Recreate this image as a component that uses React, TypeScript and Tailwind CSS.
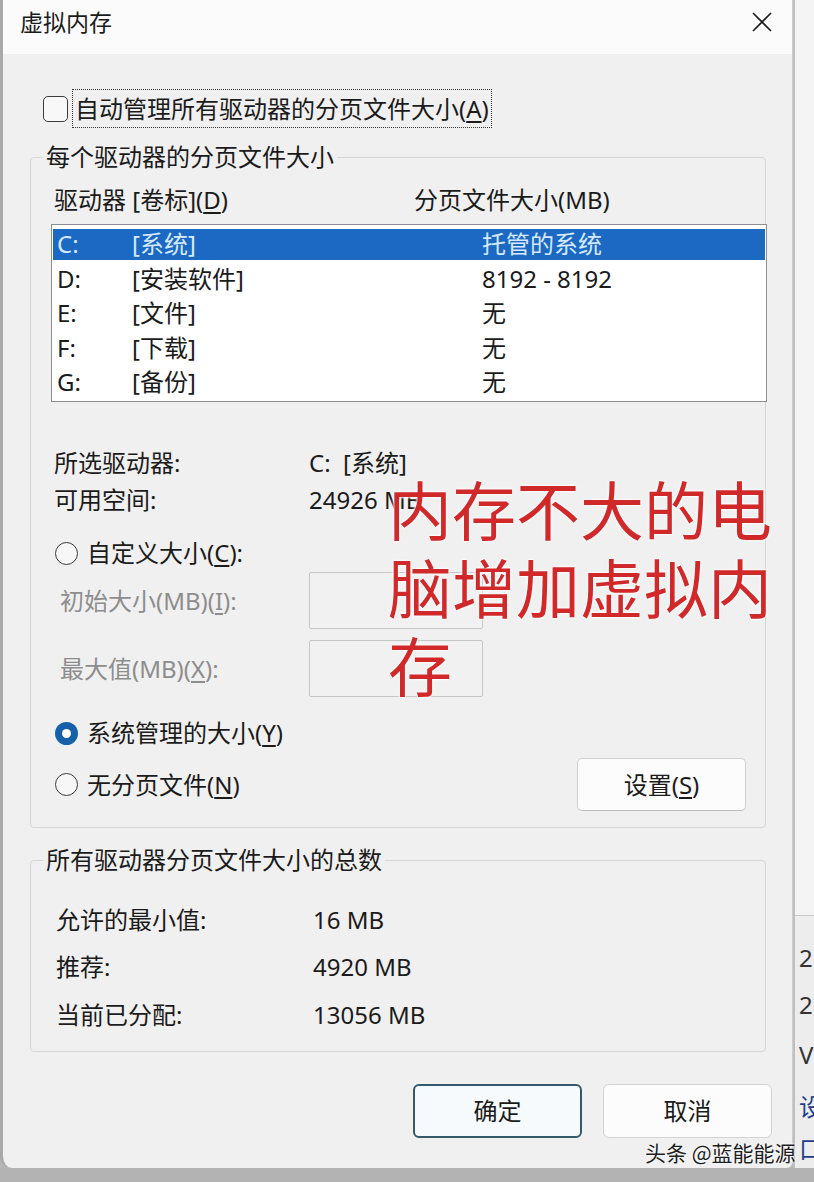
import React from "react";

const Radio = ({ checked }: { checked?: boolean }) =>
  checked ? (
    <span className="w-[23px] h-[23px] rounded-full bg-[#1560a8] flex items-center justify-center shrink-0">
      <span className="w-[9px] h-[9px] rounded-full bg-white" />
    </span>
  ) : (
    <span className="w-[23px] h-[23px] rounded-full border-[1.5px] border-[#3a3a3a] bg-[#f7f7f7] shrink-0" />
  );

const rows = [
  { d: "C:", l: "[系统]", s: "托管的系统", sel: true },
  { d: "D:", l: "[安装软件]", s: "8192 - 8192" },
  { d: "E:", l: "[文件]", s: "无" },
  { d: "F:", l: "[下载]", s: "无" },
  { d: "G:", l: "[备份]", s: "无" },
];

export default function App() {
  return (
    <div className="w-[814px] h-[1182px] bg-[#b6b6b6] flex flex-col overflow-hidden relative font-['Noto_Sans','Noto_Sans_CJK_SC',sans-serif] text-[#1b1b1b]">
      <div className="flex h-[1168px] shrink-0">
        {/* dialog window */}
        <div className="w-[793px] h-full flex flex-col border-l-[3px] border-r border-l-[#a9a9a9] border-r-[#cdcdcd] rounded-bl-[12px] rounded-br-[6px] overflow-hidden bg-[#f0f0f0]">
          {/* title bar */}
          <div className="h-[54px] shrink-0 bg-[#fbfbfb] flex justify-between items-start pl-[17px] pr-[20px] pt-[7px]">
            <span className="text-[23px] leading-[30px]">虚拟内存</span>
            <svg width="20" height="20" viewBox="0 0 20 20" className="mt-[5px]">
              <path d="M1 1 L19 19 M19 1 L1 19" stroke="#1a1a1a" strokeWidth="1.6" fill="none" />
            </svg>
          </div>
          {/* body */}
          <div className="flex-1 flex flex-col">
            {/* auto manage checkbox */}
            <div className="mt-[35px] ml-[40px] h-[39px] flex items-center">
              <span className="w-[25px] h-[26px] rounded-[5px] border-[1.5px] border-[#3c3c3c] bg-[#f8f8f8] shrink-0" />
              <span className="ml-[4px] h-[39px] border-[1.5px] border-dotted border-[#333] px-[2px] flex items-center text-[24px] leading-[30px]">
                自动管理所有驱动器的分页文件大小(<u className="underline-offset-[3px]">A</u>)
              </span>
            </div>

            {/* group 1 */}
            <div className="mt-[29px] ml-[27px] w-[736px] h-[671px] shrink-0 border border-[#d6d6d6] rounded-[4px] relative flex flex-col">
              <span className="absolute top-[-17px] left-[12px] px-[3px] bg-[#f0f0f0] text-[24px] leading-[32px]">
                每个驱动器的分页文件大小
              </span>
              <div className="mt-[27px] h-[30px] pl-[23px] flex text-[24px] leading-[30px]">
                <span className="w-[360px]">
                  驱动器 [卷标](<u className="underline-offset-[3px]">D</u>)
                </span>
                <span>分页文件大小(MB)</span>
              </div>
              {/* list box */}
              <div className="mt-[9px] ml-[20px] mr-[-2px] h-[178px] border border-[#8e8e8e] bg-white pt-[2px] px-[1px] flex flex-col">
                {rows.map((r) => (
                  <div key={r.d} className="h-[34.5px] py-[2px] shrink-0">
                    <div
                      className={
                        r.sel
                          ? "h-full flex items-center pl-[4px] bg-[#1b69c2] text-[#d6e9ff] text-[24px] leading-[30px]"
                          : "h-full flex items-center pl-[4px] text-[24px] leading-[30px]"
                      }
                    >
                      <span className="w-[75px]">{r.d}</span>
                      <span className="w-[350px]">{r.l}</span>
                      <span>{r.s}</span>
                    </div>
                  </div>
                ))}
              </div>

              {/* selected drive info */}
              <div className="mt-[42px] pl-[23px] flex flex-col text-[24px] leading-[30px]">
                <div className="h-[37px] flex items-center">
                  <span className="w-[255px]">所选驱动器:</span>
                  <span>C:&nbsp;&nbsp;[系统]</span>
                </div>
                <div className="h-[37px] flex items-center">
                  <span className="w-[255px]">可用空间:</span>
                  <span>24926 MB</span>
                </div>
              </div>

              {/* custom size */}
              <div className="mt-[17px] pl-[24px] h-[36px] flex items-center gap-[9px] text-[24px] leading-[30px]">
                <Radio />
                <span>
                  自定义大小(<u className="underline-offset-[3px]">C</u>):
                </span>
              </div>
              <div className="mt-[1px] pl-[29px] h-[57px] flex items-center text-[24px] leading-[30px] text-[#8d8d8d]">
                <span className="w-[249px]">
                  初始大小(MB)(<u className="underline-offset-[3px]">I</u>):
                </span>
                <span className="w-[174px] h-[57px] border border-[#c6c6c6] rounded-[2px] bg-[#f1f1f1]" />
              </div>
              <div className="mt-[11px] pl-[29px] h-[57px] flex items-center text-[24px] leading-[30px] text-[#8d8d8d]">
                <span className="w-[249px]">
                  最大值(MB)(<u className="underline-offset-[3px]">X</u>):
                </span>
                <span className="w-[174px] h-[57px] border border-[#c6c6c6] rounded-[2px] bg-[#f1f1f1]" />
              </div>

              {/* system managed */}
              <div className="mt-[18px] pl-[24px] h-[36px] flex items-center gap-[9px] text-[24px] leading-[30px]">
                <Radio checked />
                <span>
                  系统管理的大小(<u className="underline-offset-[3px]">Y</u>)
                </span>
              </div>
              <div className="mt-[7px] pl-[24px] pr-[19px] h-[53px] flex items-center justify-between text-[24px] leading-[30px]">
                <div className="flex items-center gap-[9px]">
                  <Radio />
                  <span>
                    无分页文件(<u className="underline-offset-[3px]">N</u>)
                  </span>
                </div>
                <button className="w-[169px] h-[53px] rounded-[5px] border border-[#d0d0d0] border-b-[#bdbdbd] bg-[#fcfcfc] text-[24px] leading-[30px]">
                  设置(<u className="underline-offset-[3px]">S</u>)
                </button>
              </div>
            </div>

            {/* group 2 */}
            <div className="mt-[32px] ml-[27px] w-[736px] h-[192px] shrink-0 border border-[#d6d6d6] rounded-[4px] relative flex flex-col pt-[35px] pl-[25px] text-[24px] leading-[30px]">
              <span className="absolute top-[-17px] left-[12px] px-[3px] bg-[#f0f0f0] text-[24px] leading-[32px]">
                所有驱动器分页文件大小的总数
              </span>
              <div className="h-[47.5px] flex items-center">
                <span className="w-[257px]">允许的最小值:</span>
                <span>16 MB</span>
              </div>
              <div className="h-[47.5px] flex items-center">
                <span className="w-[257px]">推荐:</span>
                <span>4920 MB</span>
              </div>
              <div className="h-[47.5px] flex items-center">
                <span className="w-[257px]">当前已分配:</span>
                <span>13056 MB</span>
              </div>
            </div>

            {/* dialog buttons */}
            <div className="mt-[32px] pr-[20px] flex justify-end gap-[21px]">
              <button className="w-[169px] h-[54px] rounded-[6px] border-2 border-[#34596a] bg-[#f6fafd] text-[24px] leading-[30px]">
                确定
              </button>
              <button className="w-[169px] h-[54px] rounded-[6px] border border-[#d2d2d2] bg-[#fcfcfc] text-[24px] leading-[30px]">
                取消
              </button>
            </div>
          </div>
        </div>

        {/* background window strip on the right */}
        <div className="flex-1 flex flex-col bg-[#ededed] border-l-[2px] border-[#bfbfbf] overflow-hidden">
          <div className="h-[916px] shrink-0 bg-[#f4f4f4] border-b border-[#c8c8c8]" />
          <div className="flex flex-col pl-[4px] text-[24px] leading-[30px] whitespace-nowrap">
            <span className="mt-[27px] text-[#333]">2</span>
            <span className="mt-[17px] text-[#333]">2</span>
            <span className="mt-[20px] text-[#333]">V</span>
            <span className="mt-[22px] text-[#1d3f8a]">设</span>
            <span className="mt-[12px] text-[#1d3f8a]">口</span>
          </div>
        </div>
      </div>
      <div className="flex-1 bg-[#b3b3b3]" />

      {/* red annotation overlay */}
      <div className="absolute left-[388px] top-[468px] text-[64px] leading-[78px] text-[#d1282a] [text-shadow:0_0_3px_#fff,0_0_3px_#fff,0_0_2px_#fff] font-['Noto_Sans_CJK_SC',sans-serif]">
        内存不大的电
        <br />
        脑增加虚拟内
        <br />
        存
      </div>

      {/* watermark */}
      <div className="absolute left-[645px] top-[1137px] text-[21px] leading-[30px] text-[#1e1e1e] [text-shadow:0_0_2px_#fff,0_0_2px_#fff] font-['Noto_Sans_CJK_SC',sans-serif] whitespace-nowrap">
        头条 @蓝能能源
      </div>
    </div>
  );
}
